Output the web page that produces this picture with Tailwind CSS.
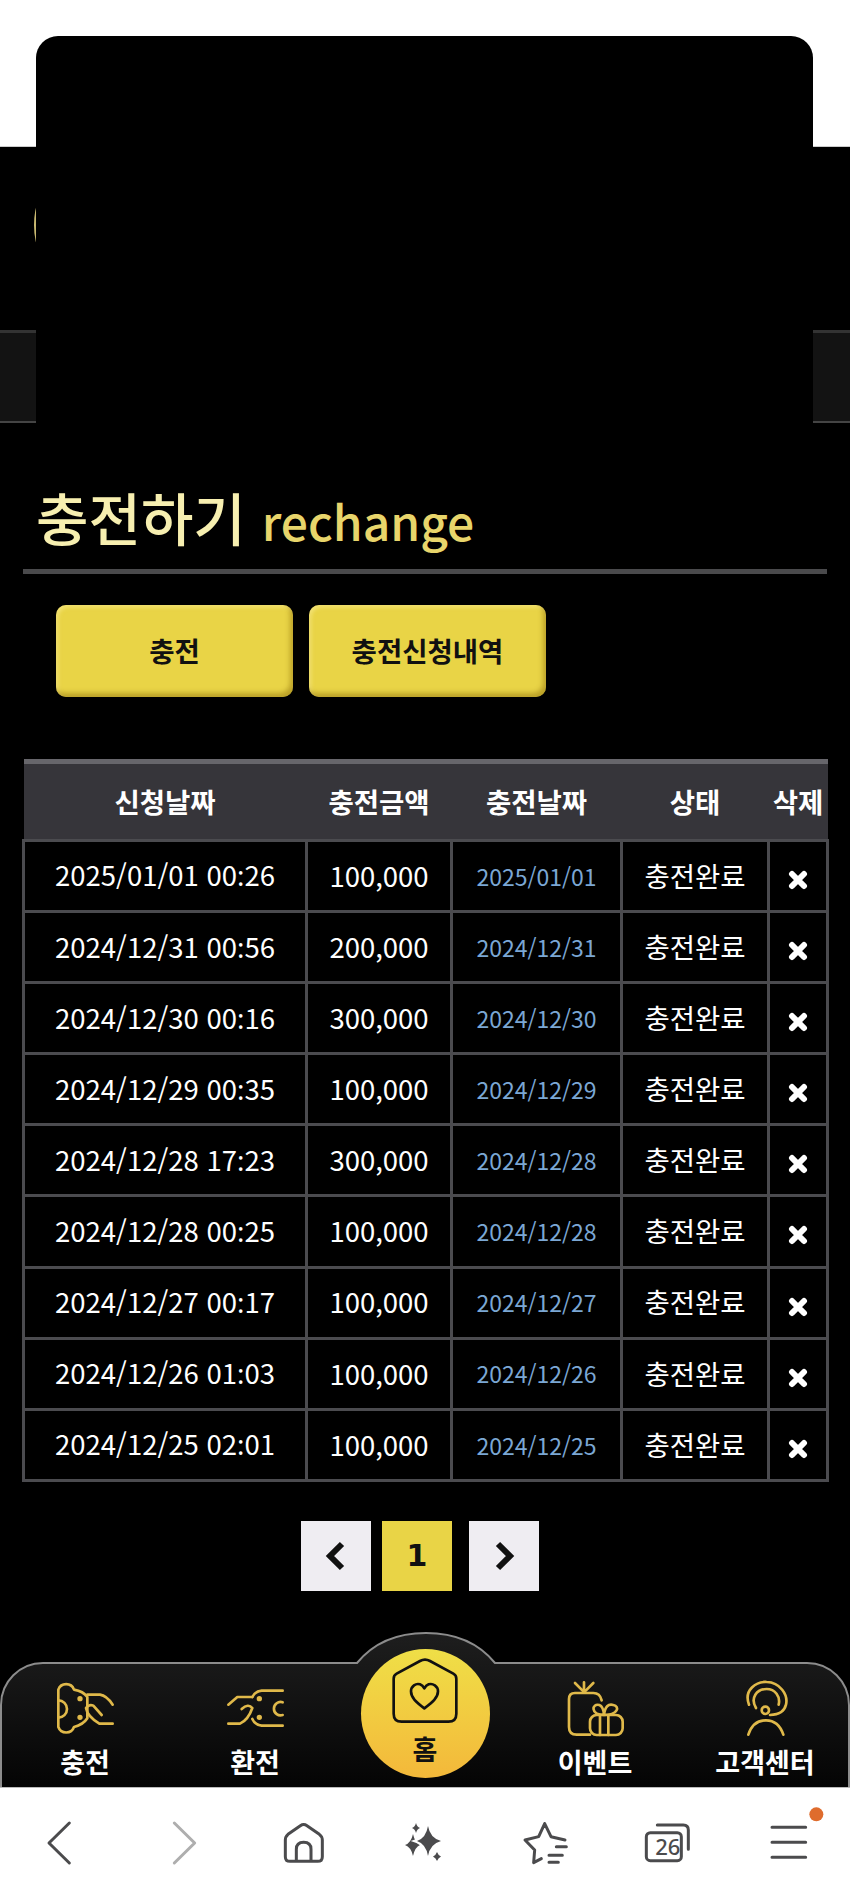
<!DOCTYPE html>
<html lang="ko">
<head>
    <meta charset="UTF-8">
    <meta name="viewport" content="width=device-width, initial-scale=1.0">
    <title>충전하기</title>
    <script src="https://cdn.jsdelivr.net/npm/@tailwindcss/browser@4"></script>
</head>
<body class="bg-black font-['Noto_Sans_CJK_KR','Noto_Sans',sans-serif]">
<div class="relative flex flex-col w-[850px] h-[1898px] overflow-hidden bg-black">

    <!-- 상단 가림 패널 -->
    <div class="absolute left-[36px] top-[36px] z-10 w-[777px] h-[390px] bg-black rounded-t-[22px]"></div>

    <div class="h-[147px] bg-white border-b border-[#ccc]"></div>
    <header class="relative h-[183px] bg-black overflow-hidden">
        <div class="absolute left-[34px] top-[5px] w-[146px] h-[146px] rounded-full border-2 border-[#c8b870]"></div>
    </header>
    <div class="h-[93px] bg-[#131313] border-t-[3px] border-t-[#333] border-b-2 border-b-[#444]"></div>

    <main class="flex-1">
        <div class="h-[146px] flex items-end pl-[36px] pb-[14px]">
            <h1 class="text-[57px] leading-[70px] font-medium text-[#f7efb0]">충전하기 <span class="text-[48px] text-[#e8d56b]">rechange</span></h1>
        </div>
        <div class="mx-[23px] h-[5px] bg-[#4a4a4c]"></div>

        <div class="flex gap-[16px] ml-[56px] mt-[31px]">
            <button class="w-[237px] h-[92px] rounded-[10px] bg-[#e9d446] text-[27.5px] font-bold text-[#111] shadow-[inset_-3px_-4px_5px_rgba(130,100,0,0.45),inset_2px_2px_4px_rgba(255,245,170,0.5)]">충전</button>
            <button class="w-[237px] h-[92px] rounded-[10px] bg-[#e9d446] text-[27.5px] font-bold text-[#111] shadow-[inset_-3px_-4px_5px_rgba(130,100,0,0.45),inset_2px_2px_4px_rgba(255,245,170,0.5)]">충전신청내역</button>
        </div>

        <table class="table-fixed border-collapse w-[804px] ml-[22px] mt-[62px] text-center text-white">
            <colgroup>
                <col class="w-[283px]"><col class="w-[145px]"><col class="w-[170px]"><col class="w-[147px]"><col class="w-[59px]">
            </colgroup>
            <thead>
                <tr class="h-[79px] bg-[#36353a] border-t-[5px] border-t-[#67666b] text-[27.5px] whitespace-nowrap">
                    <th class="font-bold">신청날짜</th><th class="font-bold">충전금액</th><th class="font-bold">충전날짜</th><th class="font-bold">상태</th><th class="font-bold">삭제</th>
                </tr>
            </thead>
            <tbody class="text-[27.5px]" id="rows"></tbody>
        </table>

        <div class="flex ml-[301px] mt-[39px]">
            <a class="flex items-center justify-center w-[70px] h-[70px] bg-[#efedf2]">
                <svg width="24" height="32" viewBox="0 0 24 32"><path d="M18 4 L6 16 L18 28" fill="none" stroke="#111" stroke-width="6"/></svg>
            </a>
            <a class="flex items-center justify-center w-[70px] h-[70px] ml-[11px] bg-[#e9d446] font-['DejaVu_Sans',sans-serif] font-bold text-[30px] text-[#111]">1</a>
            <a class="flex items-center justify-center w-[70px] h-[70px] ml-[17px] bg-[#efedf2]">
                <svg width="24" height="32" viewBox="0 0 24 32"><path d="M6 4 L18 16 L6 28" fill="none" stroke="#111" stroke-width="6"/></svg>
            </a>
        </div>
    </main>

    <!-- 하단 메뉴 -->
    <nav class="relative h-[156px] text-white">
        <svg class="absolute inset-0" width="850" height="156" viewBox="0 0 850 156">
            <defs>
                <linearGradient id="barFill" x1="0" y1="0" x2="0" y2="1">
                    <stop offset="0" stop-color="#1e1e1e"/>
                    <stop offset="1" stop-color="#040404"/>
                </linearGradient>
            </defs>
            <path d="M1 157 V74 A42 42 0 0 1 43 32 H357 C375 10 400 2 426 2 C452 2 477 10 495 32 H807 A42 42 0 0 1 849 74 V157 Z" fill="url(#barFill)" stroke="#8c8c8c" stroke-width="2"/>
        </svg>
        <div class="relative grid grid-cols-5 h-full">
            <a class="flex flex-col items-center pt-[47px]">
                <svg width="60" height="60" viewBox="165 115 180 180" fill="none" stroke="#e0b94a" stroke-width="8" stroke-linecap="round" stroke-linejoin="round">
                    <path d="M175 240 V150 A25 25 0 0 1 222 150 Q250 155 262 172 V236 Q250 255 222 262 A25 25 0 0 1 175 262 V240"/>
                    <path d="M175 182 A26 26 0 0 1 175 234"/>
                    <path d="M262 165 H300 Q320 168 338 195"/>
                    <path d="M305 226 L280 198 Q268 192 258 205 Q262 230 298 252 H338"/>
                    <circle cx="240" cy="177" r="4" fill="#e0b94a"/>
                    <circle cx="240" cy="233" r="4" fill="#e0b94a"/>
                </svg>
                <span class="mt-[11px] text-[27px] leading-[26px] font-bold">충전</span>
            </a>
            <a class="flex flex-col items-center pt-[47px]">
                <svg width="60" height="60" viewBox="675 115 180 180" fill="none" stroke="#e0b94a" stroke-width="8" stroke-linecap="round" stroke-linejoin="round">
                    <path d="M848 153 H785 Q765 155 757 172 M757 238 Q765 256 785 258 H848"/>
                    <path d="M848 188 A20 20 0 1 0 848 226"/>
                    <path d="M685 195 L712 172 H757"/>
                    <path d="M685 252 H720 Q745 240 757 205 Q745 190 725 208"/>
                    <circle cx="778" cy="177" r="4" fill="#e0b94a"/>
                    <circle cx="778" cy="233" r="4" fill="#e0b94a"/>
                </svg>
                <span class="mt-[11px] text-[27px] leading-[26px] font-bold">환전</span>
            </a>
            <a class="flex justify-center pt-[18px]">
                <div class="flex flex-col items-center w-[129px] h-[129px] pt-[9px] rounded-full bg-gradient-to-b from-[#efdf47] to-[#f3b83a] text-[#111]">
                    <svg width="66" height="66" viewBox="278 113 198 198" fill="none" stroke="#111" stroke-width="8" stroke-linejoin="round">
                        <path d="M283 175 Q283 165 292 160 L362 122 Q377 114 392 122 L462 160 Q471 165 471 175 V280 Q471 304 447 304 H307 Q283 304 283 280 Z"/>
                        <path d="M375 264 C350 245 335 232 335 213 C335 197 350 188 362 192 Q370 195 375 204 Q380 195 388 192 C400 188 416 197 416 213 C416 232 400 245 375 264 Z"/>
                    </svg>
                    <span class="mt-[10px] text-[27px] leading-[30px] font-bold">홈</span>
                </div>
            </a>
            <a class="flex flex-col items-center pt-[47px]">
                <svg width="60" height="60" viewBox="75 115 180 180" fill="none" stroke="#e0b94a" stroke-width="8" stroke-linecap="round" stroke-linejoin="round">
                    <path d="M105 130 L130 155 M160 130 L135 155 M132 128 V155"/>
                    <path d="M185 182 Q180 160 160 160 H105 Q87 160 87 178 V262 Q87 285 110 285 H150"/>
                    <rect x="150" y="226" width="98" height="60" rx="20"/>
                    <path d="M180 226 V286 M205 226 V286"/>
                    <path d="M192 226 C150 225 155 190 178 196 Q190 200 192 226 C195 200 205 192 220 196 C240 200 235 225 192 226"/>
                </svg>
                <span class="mt-[11px] text-[27px] leading-[26px] font-bold">이벤트</span>
            </a>
            <a class="flex flex-col items-center pt-[47px]">
                <svg width="60" height="60" viewBox="585 115 180 180" fill="none" stroke="#e0b94a" stroke-width="8" stroke-linecap="round" stroke-linejoin="round">
                    <path d="M627 195 C610 150 650 125 680 127 C720 128 745 165 738 195 C733 215 720 225 690 226"/>
                    <path d="M648 205 C630 175 650 148 680 148 C705 148 722 170 716 195"/>
                    <circle cx="676" cy="212" r="11"/>
                    <path d="M625 285 C635 255 655 242 678 242 C700 242 720 255 730 285"/>
                </svg>
                <span class="mt-[11px] text-[27px] leading-[26px] font-bold whitespace-nowrap">고객센터</span>
            </a>
        </div>
    </nav>

    <!-- 브라우저 하단 바 -->
    <div class="grid grid-cols-7 items-center h-[111px] bg-white border-t border-[#bbb] pb-[2px]">
        <svg class="justify-self-center" width="60" height="60" viewBox="92 96 180 180" fill="none" stroke="#4b4b4d" stroke-width="9" stroke-linecap="round" stroke-linejoin="round"><path d="M207 129 L146 189 L207 249"/></svg>
        <svg class="justify-self-center" width="60" height="60" viewBox="456 96 180 180" fill="none" stroke="#aeaeae" stroke-width="9" stroke-linecap="round" stroke-linejoin="round"><path d="M523 129 L584 189 L523 249"/></svg>
        <svg class="justify-self-center" width="60" height="60" viewBox="821 96 180 180" fill="none" stroke="#4b4b4d" stroke-width="9" stroke-linejoin="round">
            <path d="M855 180 Q855 170 863 163 L900 137 Q910 130 920 137 L957 163 Q966 170 966 180 V230 Q966 244 952 244 H869 Q855 244 855 230 Z"/>
            <path d="M888 244 V208 Q888 187 910 187 Q932 187 932 208 V244"/>
        </svg>
        <svg class="justify-self-center" width="60" height="60" viewBox="0 0 60 60" fill="#4b4b4d">
            <path d="M18 22 Q20 31 25 33 Q20 35 18 44 Q16 35 10 33 Q16 31 18 22 Z"/>
            <path d="M33 14 Q35 26 46 29 Q35 32 33 44 Q31 32 22 29 Q31 26 33 14 Z" stroke="#fff" stroke-width="4" paint-order="stroke"/>
            <path d="M21 11 Q22 15 25 16 Q22 17 21 21 Q20 17 17 16 Q20 15 21 11 Z"/>
            <path d="M42 40 Q43 43 46 44.5 Q43 46 42 49 Q41 46 38 44.5 Q41 43 42 40 Z"/>
        </svg>
        <svg class="justify-self-center" width="60" height="60" viewBox="289 96 180 180" fill="none" stroke="#4b4b4d" stroke-width="9" stroke-linecap="round" stroke-linejoin="round">
            <path d="M375 131 L394 170 L436 180 M410 200 H440 M388 226 H428 M388 247 H416 M365 236 L342 248 L345 210 L316 180 L357 170 L375 131"/>
        </svg>
        <div class="relative justify-self-center w-[60px] h-[60px]">
            <svg class="absolute inset-0" width="60" height="60" viewBox="654 96 180 180" fill="none" stroke="#4b4b4d" stroke-width="9" stroke-linecap="round" stroke-linejoin="round">
                <path d="M712 135 H790 Q805 135 805 150 V208"/>
                <rect x="679" y="158" width="105" height="84" rx="12"/>
            </svg>
            <span class="absolute left-[13px] top-[20px] w-[34px] text-center text-[22px] leading-[28px] font-medium text-[#4b4b4d] font-['Noto_Sans',sans-serif]">26</span>
        </div>
        <svg class="justify-self-center overflow-visible" width="60" height="60" viewBox="1018 96 180 180" fill="none" stroke="#4b4b4d" stroke-width="9" stroke-linecap="round">
            <path d="M1057 142 H1158 M1057 187 H1158 M1057 232 H1158"/>
            <circle cx="1190" cy="103" r="21" fill="#df6c2d" stroke="none"/>
        </svg>
    </div>
</div>

<script>
    // 충전 내역 목록
    const rows = [
        ['2025/01/01 00', '26', '100,000', '2025/01/01'],
        ['2024/12/31 00', '56', '200,000', '2024/12/31'],
        ['2024/12/30 00', '16', '300,000', '2024/12/30'],
        ['2024/12/29 00', '35', '100,000', '2024/12/29'],
        ['2024/12/28 17', '23', '300,000', '2024/12/28'],
        ['2024/12/28 00', '25', '100,000', '2024/12/28'],
        ['2024/12/27 00', '17', '100,000', '2024/12/27'],
        ['2024/12/26 01', '03', '100,000', '2024/12/26'],
        ['2024/12/25 02', '01', '100,000', '2024/12/25']
    ];
    document.getElementById('rows').innerHTML = rows.map(function(r) {
        return '<tr class="h-[71.1px]">' +
            '<td class="pb-[1px] border-[3px] border-[#4b4b4f]">' + r[0] + '<span class="font-[\'Noto_Sans\',sans-serif]">:</span>' + r[1] + '</td>' +
            '<td class="pb-[1px] border-[3px] border-[#4b4b4f]">' + r[2] + '</td>' +
            '<td class="border-[3px] border-[#4b4b4f] text-[23px] text-[#7ba7d4]">' + r[3] + '</td>' +
            '<td class="pb-[1px] border-[3px] border-[#4b4b4f]">충전완료</td>' +
            '<td class="border-[3px] border-[#4b4b4f]"><svg class="inline-block" width="20" height="20" viewBox="0 0 20 20"><path d="M4 4 L16 16 M16 4 L4 16" stroke="#fff" stroke-width="6" stroke-linecap="round"/></svg></td>' +
            '</tr>';
    }).join('');
</script>
</body>
</html>
